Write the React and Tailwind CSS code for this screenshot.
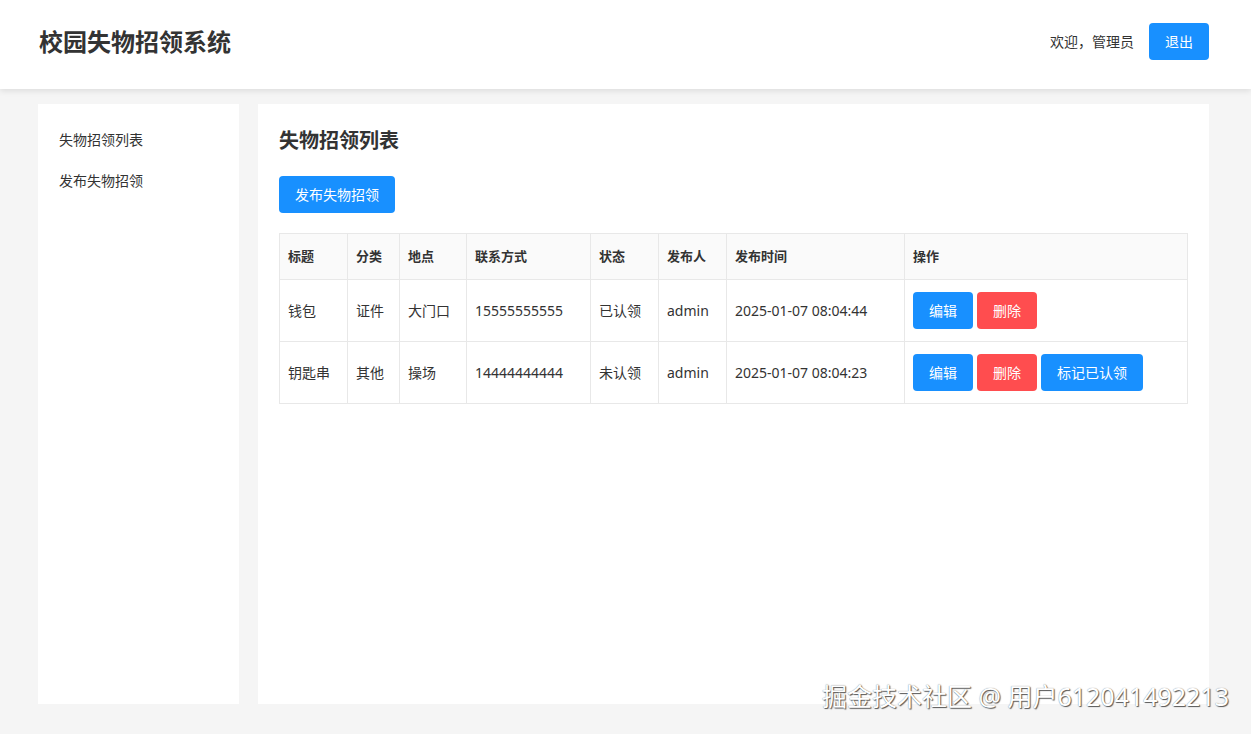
import React from 'react';

const rows = [
  { title: '钱包', cat: '证件', place: '大门口', phone: '15555555555', status: '已认领', user: 'admin', time: '2025-01-07 08:04:44', claimed: true },
  { title: '钥匙串', cat: '其他', place: '操场', phone: '14444444444', status: '未认领', user: 'admin', time: '2025-01-07 08:04:23', claimed: false },
];

const btn = 'rounded-[4px] px-4 py-2 text-sm leading-[21px] text-white';

export default function App() {
  return (
    <div className="relative min-h-[734px] bg-[#f5f5f5] text-[#333]" style={{ fontFamily: '"Noto Sans", "Noto Sans CJK SC", sans-serif' }}>
      <header className="flex h-[89px] items-center justify-between bg-white pr-[42px] pb-[6px] pl-[39px] shadow-[0_2px_6px_rgba(0,0,0,0.1)]">
        <h1 className="text-[24px] font-bold text-[#333]">校园失物招领系统</h1>
        <div className="flex items-center gap-[15px]">
          <span className="text-sm">欢迎，管理员</span>
          <button className={`${btn} bg-[#1890ff]`}>退出</button>
        </div>
      </header>

      <div className="flex gap-[19px] pt-[15px] pr-[42px] pb-[30px] pl-[38px]">
        <aside className="h-[600px] w-[201px] shrink-0 bg-white px-[21px] py-[25px]">
          <ul className="flex flex-col gap-[20px] text-sm leading-[21px]">
            <li>失物招领列表</li>
            <li>发布失物招领</li>
          </ul>
        </aside>

        <main className="h-[600px] flex-1 bg-white px-[21px] pt-[19px]">
          <h2 className="text-[20px] font-bold leading-[36px]">失物招领列表</h2>
          <button className={`${btn} mt-[17px] bg-[#1890ff]`}>发布失物招领</button>

          <table className="mt-[20px] w-full border-collapse text-sm leading-[21px]">
            <thead>
              <tr className="bg-[#fafafa] text-[13px] font-bold">
                <th className="w-[68px] border border-[#e8e8e8] px-2 py-3 text-left">标题</th>
                <th className="w-[52px] border border-[#e8e8e8] px-2 py-3 text-left">分类</th>
                <th className="w-[67px] border border-[#e8e8e8] px-2 py-3 text-left">地点</th>
                <th className="w-[124px] border border-[#e8e8e8] px-2 py-3 text-left">联系方式</th>
                <th className="w-[68px] border border-[#e8e8e8] px-2 py-3 text-left">状态</th>
                <th className="w-[68px] border border-[#e8e8e8] px-2 py-3 text-left">发布人</th>
                <th className="w-[178px] border border-[#e8e8e8] px-2 py-3 text-left">发布时间</th>
                <th className="border border-[#e8e8e8] px-2 py-3 text-left">操作</th>
              </tr>
            </thead>
            <tbody>
              {rows.map((r) => (
                <tr key={r.phone}>
                  <td className="border border-[#e8e8e8] px-2 py-3">{r.title}</td>
                  <td className="border border-[#e8e8e8] px-2 py-3">{r.cat}</td>
                  <td className="border border-[#e8e8e8] px-2 py-3">{r.place}</td>
                  <td className="border border-[#e8e8e8] px-2 py-3">{r.phone}</td>
                  <td className="border border-[#e8e8e8] px-2 py-3">{r.status}</td>
                  <td className="border border-[#e8e8e8] px-2 py-3">{r.user}</td>
                  <td className="border border-[#e8e8e8] px-2 py-3">{r.time}</td>
                  <td className="border border-[#e8e8e8] px-2 py-3">
                    <div className="flex gap-[4px]">
                      <button className={`${btn} bg-[#1890ff]`}>编辑</button>
                      <button className={`${btn} bg-[#ff4d4f]`}>删除</button>
                      {!r.claimed && <button className={`${btn} bg-[#1890ff]`}>标记已认领</button>}
                    </div>
                  </td>
                </tr>
              ))}
            </tbody>
          </table>
        </main>
      </div>

      <div className="absolute right-[22px] bottom-[19px] text-[25px] text-white [text-shadow:1px_1px_1px_#555,0_0_1px_#777]">
        掘金技术社区 @ 用户612041492213
      </div>
    </div>
  );
}
